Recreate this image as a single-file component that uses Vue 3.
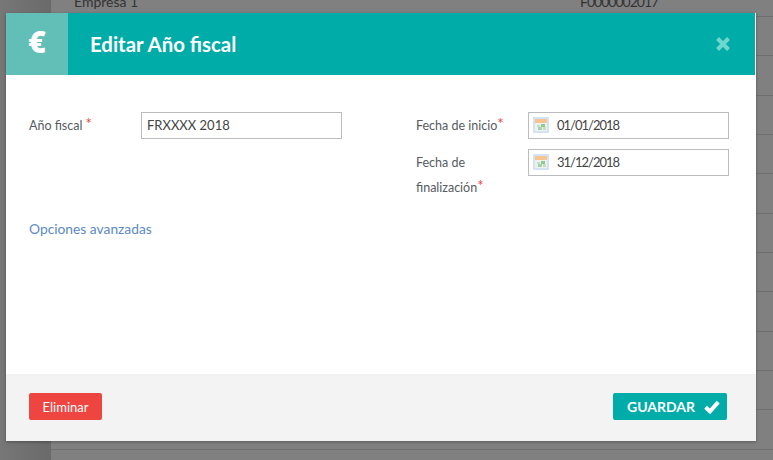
<script setup>
const leftField = { label: "Año fiscal", value: "FRXXXX 2018" };
const dateFields = [
  { label: "Fecha de inicio", value: "01/01/2018" },
  { label: "Fecha de finalización", value: "31/12/2018" },
];
const bgRows = Array.from({ length: 12 }, (_, i) => i);
</script>

<template>
  <div class="page">
    <div class="backdrop">
      <div class="bg-gutter"></div>
      <div class="bg-table">
        <div v-for="r in bgRows" :key="r" class="bg-row">
          <template v-if="r === 0">
            <span class="bg-name">Empresa 1</span>
            <span class="bg-code">F0000002017</span>
          </template>
        </div>
      </div>
    </div>

    <div class="modal">
      <header class="modal-head">
        <div class="head-icon">€</div>
        <h2 class="head-title">Editar Año fiscal</h2>
        <svg class="head-close" viewBox="0 0 16 16" width="16" height="16">
          <path d="M2.5 2.5L13.5 13.5M13.5 2.5L2.5 13.5" stroke="#6fd6d0" stroke-width="4" />
        </svg>
      </header>

      <div class="modal-body">
        <div class="form-row">
          <div class="form-col">
            <div class="field">
              <label class="field-label">{{ leftField.label }} <span class="req">*</span></label>
              <div class="input">{{ leftField.value }}</div>
            </div>
          </div>
          <div class="form-col right">
            <div v-for="f in dateFields" :key="f.value" class="field">
              <label class="field-label date">{{ f.label }}<span class="req">*</span></label>
              <div class="input">
                <svg class="cal" viewBox="0 0 16 16" width="16" height="16">
                  <rect x="0" y="0" width="16" height="16" rx="1" fill="#d5e2f3" />
                  <rect x="2" y="2" width="12" height="12" fill="#eef1ee" />
                  <rect x="2" y="2" width="12" height="4" fill="#f6c48f" />
                  <rect x="4" y="8" width="3" height="2" fill="#c9dcc9" />
                  <rect x="8" y="7" width="4" height="3" fill="#8fca8f" />
                  <rect x="5" y="10" width="4" height="3" fill="#a5d3a5" />
                  <rect x="10" y="10" width="3" height="3" fill="#c4dcc4" />
                </svg>
                <span class="date-value">{{ f.value }}</span>
              </div>
            </div>
          </div>
        </div>
        <a class="advanced">Opciones avanzadas</a>
      </div>

      <footer class="modal-foot">
        <button class="btn btn-delete">Eliminar</button>
        <button class="btn btn-save">
          GUARDAR
          <svg viewBox="0 0 16 14" width="16" height="14">
            <path d="M1.6 7.2L6 11.4L14.2 2.2" fill="none" stroke="#fff" stroke-width="4" />
          </svg>
        </button>
      </footer>
    </div>
  </div>
</template>

<style>
html, body {
  margin: 0;
  overflow: hidden;
}
</style>

<style scoped>
.page {
  position: relative;
  width: 773px;
  height: 460px;
  overflow: hidden;
  background: #808080;
  font-family: Lato, "Open Sans", "Liberation Sans", sans-serif;
}
.backdrop {
  position: absolute;
  inset: 0;
  display: flex;
}
.bg-gutter {
  width: 51px;
  background: linear-gradient(90deg, #777, #6a6a6a);
}
.bg-table {
  flex: 1;
  margin-top: -22.33px;
}
.bg-row {
  height: 39.33px;
  position: relative;
  background: linear-gradient(#808080 calc(100% - 1px), #6f6f6f 0);
  font-size: 14px;
  color: #333;
}
.bg-name {
  position: absolute;
  left: 23px;
  top: 15px;
}
.bg-code {
  position: absolute;
  left: 529px;
  top: 15px;
  letter-spacing: -1px;
}
.modal {
  position: absolute;
  left: 6px;
  top: 13px;
  width: 750px;
  height: 428px;
  display: flex;
  flex-direction: column;
  background: #fff;
  box-shadow: 0 1px 3px rgba(0, 0, 0, 0.3);
}
.modal-head {
  height: 62px;
  display: flex;
  align-items: center;
  background: #00aca8;
  border-right: 1px solid #fff;
  color: #fff;
}
.head-icon {
  width: 62px;
  height: 62px;
  background: #62bfb8;
  font-family: "Open Sans", sans-serif;
  font-size: 30px;
  font-weight: 800;
  line-height: 58px;
  text-align: center;
}
.head-title {
  margin: 0 0 0 22px;
  flex: 1;
  font-size: 20.4px;
  font-weight: 700;
}
.head-close {
  margin-right: 24px;
}
.modal-body {
  flex: 1;
  padding: 37px 27px 0 23px;
}
.form-row {
  display: flex;
  justify-content: space-between;
}
.form-col {
  width: 313px;
}
.form-col.right {
  display: flex;
  flex-direction: column;
  gap: 10px;
}
.field {
  display: flex;
  align-items: flex-start;
}
.field-label {
  width: 112px;
  flex: none;
  margin-top: 1px;
  font-size: 12.5px;
  line-height: 25px;
  color: #555b63;
}
.field-label.date {
  padding-right: 12px;
  box-sizing: border-box;
}
.req {
  color: #e8443c;
  font-size: 15px;
  line-height: 1;
  vertical-align: 1px;
}
.input {
  flex: 1;
  height: 27px;
  box-sizing: border-box;
  border: 1px solid #bcbcbc;
  display: flex;
  align-items: center;
  gap: 8px;
  padding-left: 5px;
  padding-bottom: 2px;
  font-size: 13px;
  color: #444;
}
.form-col.right .input {
  padding-left: 4px;
}
.date-value {
  letter-spacing: -1px;
}
.cal {
  flex: none;
}
.advanced {
  display: block;
  margin-top: 20px;
  font-size: 13.8px;
  line-height: 18px;
  color: #5b8ac4;
}
.modal-foot {
  height: 67px;
  padding: 19px 29px 0 23px;
  box-sizing: border-box;
  display: flex;
  justify-content: space-between;
  align-items: flex-start;
  background: #f3f3f3;
}
.btn {
  height: 27px;
  border: 0;
  border-radius: 2px;
  color: #fff;
  font-family: inherit;
  font-size: 13px;
  padding: 0;
}
.btn-delete {
  width: 73px;
  background: #ee4540;
}
.btn-save {
  width: 114px;
  padding-left: 14px;
  background: #00aca8;
  font-size: 14px;
  font-weight: 700;
  display: flex;
  align-items: center;
  gap: 9px;
}
</style>
